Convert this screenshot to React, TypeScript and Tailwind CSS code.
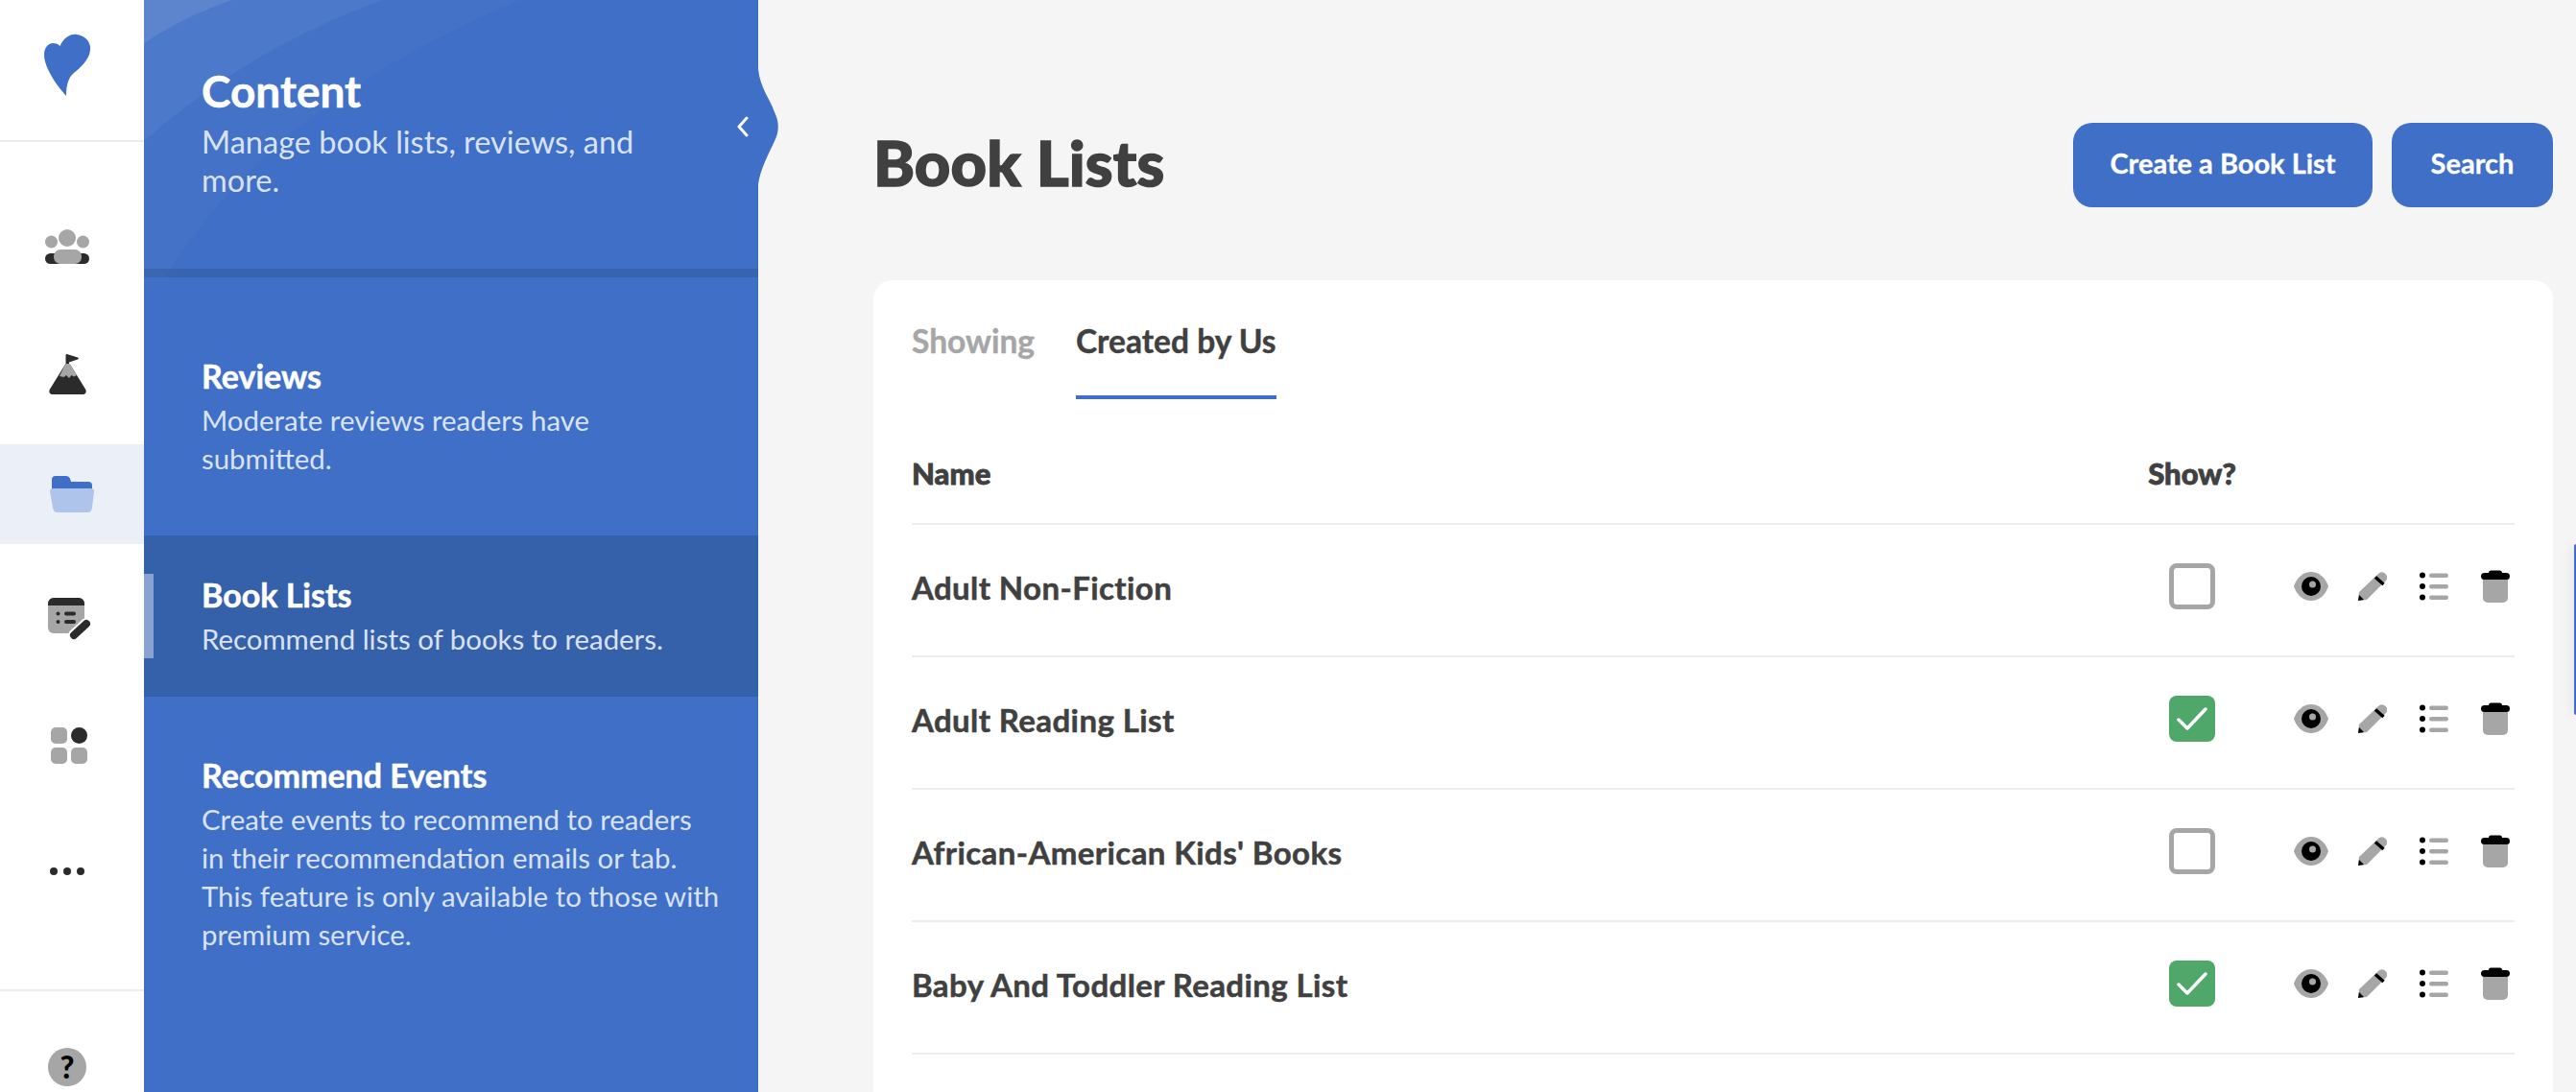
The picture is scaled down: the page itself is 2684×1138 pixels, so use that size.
const rows = [
  { name: "Adult Non-Fiction", shown: false },
  { name: "Adult Reading List", shown: true },
  { name: "African-American Kids' Books", shown: false },
  { name: "Baby And Toddler Reading List", shown: true },
];

const Heart = () => (
  <svg width="48" height="65" viewBox="0 0 48 65" fill="#3f6fc6">
    <path d="M16.500 13C20 5 27 0 34 1c9 1 15 8 14 16-1 11-11 19-17 24-5 4-8 11-8 24C14 55 0 36 0 22c0-8 5-12 9-12 3 0 6 1 7.500 3z" />
  </svg>
);

const People = () => (
  <svg width="46" height="36" viewBox="0 0 46 36">
    <circle cx="6.500" cy="13" r="6.500" fill="#a6a6a6" />
    <circle cx="23" cy="9" r="9" fill="#a6a6a6" />
    <circle cx="39.500" cy="13" r="6.500" fill="#a6a6a6" />
    <rect x="0" y="25" width="46" height="11" rx="5.500" fill="#2b2b2b" />
    <rect x="9" y="21" width="29" height="15" rx="7" fill="#a6a6a6" />
  </svg>
);

const Mountain = () => (
  <svg width="39" height="42" viewBox="0 0 39 42">
    <path d="M17.500 1.500a1.500 1.500 0 0 1 2-1.300L30 3.600c1.200.4 1.200 1.600 0 2L21 8.500V14h-3.500z" fill="#2b2b2b" />
    <path d="M16.500 11.500c1.500-2 4.500-2 6 0l15.500 25c1.500 2.500.5 5.500-2.500 5.500h-32C.5 42-.5 39 1 36.500z" fill="#2b2b2b" />
    <path d="M16.500 11.500c1.500-2 4.500-2 6 0l6.500 10.500-3 1.500-2.500-1.500-2.500 3-3-3-2.500 2-4.500-1z" fill="#a6a6a6" />
  </svg>
);

const Folder = () => (
  <svg width="46" height="38" viewBox="0 0 46 38">
    <path d="M2 16V4a4 4 0 0 1 4-4h10c4 0 5 2 6 6h18a4 4 0 0 1 4 4v6z" fill="#3f6fc6" />
    <path d="M3 13h40c2 0 3 1 3 3l-2 17c-.4 3-2 5-5 5H8c-3 0-4.600-2-5-5L0 16c0-2 1-3 3-3z" fill="#afc4ea" />
  </svg>
);

const ListEdit = () => (
  <svg width="44" height="44" viewBox="0 0 44 44">
    <rect x="0" y="0" width="38" height="37" rx="6" fill="#a6a6a6" />
    <path d="M0 8V6a6 6 0 0 1 6-6h26a6 6 0 0 1 6 6v2z" fill="#2b2b2b" />
    <circle cx="10.500" cy="16.500" r="2" fill="#2b2b2b" />
    <circle cx="10.500" cy="25" r="2" fill="#2b2b2b" />
    <rect x="17" y="14.500" width="12" height="4" rx="2" fill="#2b2b2b" />
    <rect x="17" y="23" width="12" height="4" rx="2" fill="#2b2b2b" />
    <path d="M27 39l13-12" stroke="#fff" strokeWidth="12" strokeLinecap="round" />
    <path d="M27 39l13-12" stroke="#2b2b2b" strokeWidth="8" strokeLinecap="round" />
  </svg>
);

const Apps = () => (
  <svg width="38" height="38" viewBox="0 0 38 38">
    <rect x="0" y="0" width="17" height="17" rx="5" fill="#a6a6a6" />
    <circle cx="29.500" cy="8.500" r="8.500" fill="#2b2b2b" />
    <rect x="0" y="21" width="17" height="17" rx="5" fill="#a6a6a6" />
    <rect x="21" y="21" width="17" height="17" rx="5" fill="#a6a6a6" />
  </svg>
);

const Dots = () => (
  <svg width="36" height="8" viewBox="0 0 36 8" fill="#2b2b2b">
    <circle cx="4" cy="4" r="4" />
    <circle cx="18" cy="4" r="4" />
    <circle cx="32" cy="4" r="4" />
  </svg>
);

const Eye = () => (
  <svg width="36" height="30" viewBox="0 0 36 30">
    <path d="M0 15C3 6 10 0 18 0s15 6 18 15c-3 9-10 15-18 15S3 24 0 15z" fill="#a6a6a6" />
    <circle cx="18" cy="15" r="10" fill="#000" />
    <circle cx="19.500" cy="13" r="3.500" fill="#a6a6a6" />
  </svg>
);

const Pencil = () => (
  <svg width="30" height="30" viewBox="0 0 30 30">
    <path d="M21 2a5 5 0 0 1 7.500 0 5 5 0 0 1 .5 7L9 29 0 30l1-9z" fill="#a6a6a6" />
    <path d="M18 5.500l8.500 7.500" stroke="#000" strokeWidth="3.500" />
    <path d="M0 30l1-6 5 5z" fill="#000" />
  </svg>
);

const Bullets = () => (
  <svg width="30" height="30" viewBox="0 0 30 30">
    <circle cx="3" cy="3.500" r="3" fill="#000" />
    <circle cx="3" cy="15" r="3" fill="#000" />
    <circle cx="3" cy="26.500" r="3" fill="#000" />
    <rect x="10" y="1.500" width="20" height="4.500" rx="2.200" fill="#a6a6a6" />
    <rect x="10" y="13" width="20" height="4.500" rx="2.200" fill="#a6a6a6" />
    <rect x="10" y="24.500" width="20" height="4.500" rx="2.200" fill="#a6a6a6" />
  </svg>
);

const Trash = () => (
  <svg width="30" height="34" viewBox="0 0 30 34">
    <path d="M2 8h26v21a5 5 0 0 1-5 5H7a5 5 0 0 1-5-5z" fill="#a6a6a6" />
    <rect x="8" y="0.500" width="14" height="5" rx="2.500" fill="#000" />
    <rect x="0" y="3" width="30" height="7" rx="3.500" fill="#000" />
  </svg>
);

const Row = ({ name, shown }: { name: string; shown: boolean }) => (
  <div className="flex h-[138px] items-center border-b-2 border-[#ececec] pb-2">
    <div className="flex-1 pt-1 text-[33px] font-bold tracking-[0.4px] text-[#404040] [-webkit-text-stroke:0.5px_#404040]">{name}</div>
    <div className="flex w-[100px] shrink-0 justify-center">
      {shown ? (
        <div className="flex h-12 w-12 items-center justify-center rounded-lg bg-[#4fa76a]">
          <svg width="32" height="26" viewBox="0 0 32 26" fill="none" stroke="#fff" strokeWidth="3.500" strokeLinecap="round" strokeLinejoin="round">
            <path d="M2 14l9 9L30 3" />
          </svg>
        </div>
      ) : (
        <div className="h-12 w-12 rounded-lg border-[5px] border-[#a6a6a6] bg-white" />
      )}
    </div>
    <div className="-mr-3 flex w-[298px] shrink-0 items-center pl-[42px]">
      <div className="flex w-16 justify-center"><Eye /></div>
      <div className="flex w-16 justify-center"><Pencil /></div>
      <div className="flex w-16 justify-center"><Bullets /></div>
      <div className="flex w-16 justify-center"><Trash /></div>
    </div>
  </div>
);

const NavItem = ({ title, lines, active }: { title: string; lines: string[]; active?: boolean }) => (
  <div className={active ? "relative bg-[#3560aa] pb-10 pl-[60px] pt-11" : "pb-10 pl-[60px] pt-11"}>
    {active && <div className="absolute left-0 top-10 h-[88px] w-2.5 bg-[#8aa2cf]" />}
    <div className="text-[34px] font-bold leading-9 text-white [-webkit-text-stroke:0.5px_#fff]">{title}</div>
    <div className="mt-2 text-[29.400px] leading-10 text-[#d9e2f4]">
      {lines.map((l) => (
        <div key={l}>{l}</div>
      ))}
    </div>
  </div>
);

export default function App() {
  return (
    <div className="relative flex h-[1138px] w-[2684px] overflow-hidden bg-[#f5f5f5] font-['Lato',sans-serif]">
      <aside className="flex w-[150px] shrink-0 flex-col bg-white">
        <div className="flex h-[148px] justify-center border-b-2 border-[#ececec] pr-[10px] pt-[35px]">
          <Heart />
        </div>
        <nav className="flex flex-col gap-[26px] pt-[55px]">
          <div className="flex h-[104px] items-center justify-center pr-[10px] pt-1"><People /></div>
          <div className="flex h-[104px] items-center justify-center pr-[10px] pt-[10px]"><Mountain /></div>
          <div className="flex h-[104px] items-center justify-center bg-[#ebeff8]"><Folder /></div>
          <div className="flex h-[104px] items-center justify-center pr-[6px]"><ListEdit /></div>
          <div className="flex h-[104px] items-center justify-center pr-[6px] pt-[3px]"><Apps /></div>
          <div className="flex h-[104px] items-center justify-center pr-[10px] pt-[6px]"><Dots /></div>
        </nav>
        <div className="mt-auto flex h-[107px] justify-center border-t-2 border-[#ececec] pr-[10px] pt-[59px]">
          <div className="flex h-10 w-10 shrink-0 items-center justify-center rounded-full bg-[#a6a6a6] text-[32px] font-black text-black">?</div>
        </div>
      </aside>

      <section className="relative z-10 w-[640px] shrink-0 bg-[#3f6fc6]">
        <svg className="absolute left-0 top-0" width="400" height="289" viewBox="0 0 400 289" fill="#fff">
          <path d="M0 45Q40 18 92 0H0z" fillOpacity="0.1" />
          <path d="M0 147Q110 50 249 0H0z" fillOpacity="0.05" />
          <path d="M23 289Q130 110 392 0H0v289z" fillOpacity="0.025" />
        </svg>
        <svg className="absolute left-[640px] top-[72px]" width="22" height="120" viewBox="0 0 22 120" fill="#3f6fc6">
          <path d="M0 0C2 20 12 30 17 45c5 10 5 20 0 30C10 90 2 105 0 120z" />
        </svg>
        <svg className="absolute left-[617px] top-[121px]" width="14" height="22" viewBox="0 0 14 22" fill="none" stroke="#fff" strokeWidth="3" strokeLinecap="round" strokeLinejoin="round">
          <path d="M11 2L3 11l8 9" />
        </svg>
        <header className="relative h-[280px] pl-[60px] pt-[71px]">
          <h2 className="text-[46px] font-bold leading-[48px] text-white [-webkit-text-stroke:0.5px_#fff]">Content</h2>
          <p className="mt-[9px] w-[480px] text-[32.500px] leading-10 text-[#d9e2f4]">
            Manage book lists, reviews, and more.
          </p>
        </header>
        <div className="h-[9px] bg-[#3863ae]" />
        <div className="flex flex-col gap-5 pt-[41px]">
          <NavItem title="Reviews" lines={["Moderate reviews readers have", "submitted."]} />
          <NavItem title="Book Lists" lines={["Recommend lists of books to readers."]} active />
          <NavItem
            title="Recommend Events"
            lines={[
              "Create events to recommend to readers",
              "in their recommendation emails or tab.",
              "This feature is only available to those with",
              "premium service.",
            ]}
          />
        </div>
      </section>

      <main className="flex min-w-0 flex-1 flex-col pl-[120px] pr-6 pt-32">
        <div className="flex h-[88px] shrink-0 items-center justify-between">
          <h1 className="pb-1 text-[65px] font-black tracking-[0.2px] text-[#404040] [-webkit-text-stroke:1.500px_#404040]">Book Lists</h1>
          <div className="flex gap-5">
            <button className="flex h-[88px] w-[312px] items-center justify-center rounded-[20px] bg-[#3f6fc6] pb-1 text-[29px] font-bold text-white [-webkit-text-stroke:0.3px_#fff]">
              Create a Book List
            </button>
            <button className="flex h-[88px] w-[168px] items-center justify-center rounded-[20px] bg-[#3f6fc6] pb-1 text-[29px] font-bold text-white [-webkit-text-stroke:0.3px_#fff]">
              Search
            </button>
          </div>
        </div>
        <div className="mt-[76px] flex-1 rounded-t-[20px] bg-white px-10 pt-[38px]">
          <div className="flex gap-[42px] text-[33.500px] font-bold leading-[50px] [-webkit-text-stroke:0.4px]">
            <div className="w-[129px] shrink-0 whitespace-nowrap text-[#a6a6a6]">Showing</div>
            <div className="border-b-4 border-[#3f6fc6] pb-8 text-[#404040]">Created by Us</div>
          </div>
          <div className="mt-[26px] flex h-[105px] items-center border-b-2 border-[#ececec] text-[31px] font-black text-[#404040] [-webkit-text-stroke:0.8px_#404040]">
            <div className="flex-1">Name</div>
            <div className="w-[100px] shrink-0 text-center">Show?</div>
            <div className="w-[286px] shrink-0" />
          </div>
          {rows.map((r) => (
            <Row key={r.name} name={r.name} shown={r.shown} />
          ))}
        </div>
      </main>

      <div className="absolute right-0 top-[567px] h-[178px] w-[2px] rounded-l-md bg-[#3f6fc6] shadow-[0_0_12px_rgba(0,0,0,0.25)]" />
    </div>
  );
}
